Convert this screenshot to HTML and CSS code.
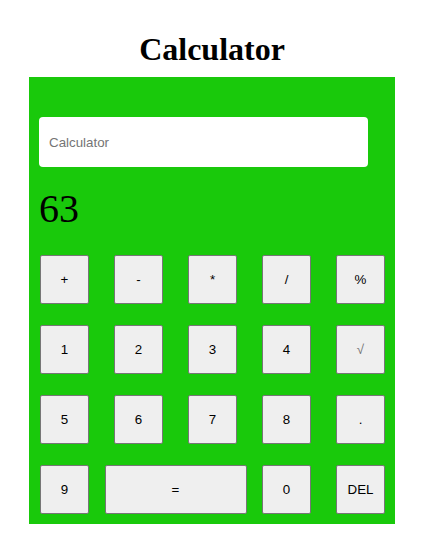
FILE: index.html
```html
<!DOCTYPE html>
<html>
<head>
<meta charset="utf-8">
<title>Calculator</title>
<link rel="stylesheet" href="styles.css">
</head>
<body>
<div class="wrap">
  <h1 class="title">Calculator</h1>
  <div class="calc">
    <input class="display" type="text" placeholder="Calculator">
    <div class="result">63</div>
    <div class="keys">
      <button class="key">+</button>
      <button class="key">-</button>
      <button class="key">*</button>
      <button class="key">/</button>
      <button class="key">%</button>
      <button class="key">1</button>
      <button class="key">2</button>
      <button class="key">3</button>
      <button class="key">4</button>
      <button class="key key-light">√</button>
      <button class="key">5</button>
      <button class="key">6</button>
      <button class="key">7</button>
      <button class="key">8</button>
      <button class="key">.</button>
      <button class="key">9</button>
      <button class="key key-wide">=</button>
      <button class="key">0</button>
      <button class="key">DEL</button>
    </div>
  </div>
</div>
</body>
</html>
```
FILE: styles.css
```css
html, body {
  margin: 0;
  padding: 0;
  background: #ffffff;
}

.wrap {
  width: 366px;
  margin-left: 29px;
  padding-top: 31px;
}

.title {
  margin: 0 0 10px 0;
  font-family: "Liberation Serif", "Times New Roman", serif;
  font-size: 32px;
  font-weight: bold;
  line-height: 36px;
  text-align: center;
  color: #000;
}

.calc {
  background: #19c90b;
  padding: 40px 11px 10px 10px;
  display: flex;
  flex-direction: column;
}

.display {
  box-sizing: border-box;
  width: 329px;
  height: 50px;
  margin: 0;
  border: none;
  border-radius: 4px;
  background: #fff;
  padding: 0 10px;
  font-family: "Liberation Sans", Arial, sans-serif;
  font-size: 13.33px;
  color: #000;
  outline: none;
}

.display::placeholder {
  color: #757575;
}

.result {
  margin: 20px 0 24px 0;
  font-family: "Liberation Serif", "Times New Roman", serif;
  font-size: 40px;
  line-height: 44px;
  color: #000;
}

.keys {
  margin-left: 1px;
  display: grid;
  grid-template-columns: repeat(5, 49px);
  grid-auto-rows: 49px;
  column-gap: 25px;
  row-gap: 21px;
}

.key {
  box-sizing: border-box;
  margin: 0;
  padding: 0;
  width: 49px;
  height: 49px;
  background: #efefef;
  border: 1px solid #767676;
  border-radius: 2px;
  font-family: "Liberation Sans", Arial, sans-serif;
  font-size: 13.33px;
  color: #000;
}

.key-light {
  color: #6d6d6d;
}

.key-wide {
  grid-column: span 2;
  width: 142px;
  justify-self: center;
}
```
